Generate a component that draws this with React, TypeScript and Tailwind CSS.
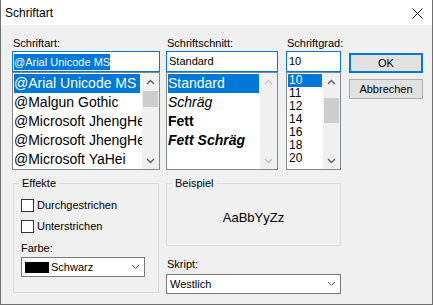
const fontLabel = "font-['Liberation_Sans',Arial,sans-serif]";

function Chevron({ up, color = '#606060', w = 1.4 }: { up?: boolean; color?: string; w?: number }) {
  return (
    <svg width="9" height="6" viewBox="0 0 9 6" fill="none">
      <path d={up ? 'M1 5L4.5 1.5L8 5' : 'M1 1L4.5 4.5L8 1'} stroke={color} strokeWidth={w} />
    </svg>
  );
}

function ScrollBar({ thumb, disabled }: { thumb?: string; disabled?: boolean }) {
  const c = disabled ? '#c4c4c4' : '#606060';
  return (
    <div className="flex w-[17px] shrink-0 flex-col bg-[#f0f0f0]">
      <div className="flex h-[17px] items-center justify-center">
        <Chevron up color={c} />
      </div>
      <div className="flex-1 px-[1px]">{thumb && <div className={`bg-[#cdcdcd] ${thumb}`} />}</div>
      <div className="flex h-[17px] items-center justify-center">
        <Chevron color={c} />
      </div>
    </div>
  );
}

function Combo({ children, width }: { children: React.ReactNode; width: string }) {
  return (
    <div className={`flex h-[20px] items-center justify-between border border-[#7a7a7a] bg-white pr-[4px] ${width}`}>
      <div className="flex items-center">{children}</div>
      <Chevron w={1} color="#555" />
    </div>
  );
}

const fonts = ['@Arial Unicode MS', '@Malgun Gothic', '@Microsoft JhengHei', '@Microsoft JhengHei UI', '@Microsoft YaHei'];
const sizes = ['10', '11', '12', '14', '16', '18', '20'];

export default function App() {
  return (
    <div className={`flex h-[305px] w-[433px] flex-col border-x border-b border-[#6f6f6f] bg-[#f0f0f0] text-black ${fontLabel}`}>
      <div className="flex h-[25px] shrink-0 items-center justify-between bg-white pl-[4px] pr-[9px] pt-[1px]">
        <span className="text-[12px]">Schriftart</span>
        <svg width="11" height="11" viewBox="0 0 11 11">
          <path d="M0.5 0.5L10.5 10.5M10.5 0.5L0.5 10.5" stroke="#111" strokeWidth="1" />
        </svg>
      </div>

      <div className="flex flex-col pl-[11px] pt-[12px] text-[11px] leading-[13px]">
        <div className="flex">
          <div className="flex w-[148px] flex-col">
            <div className="h-[13px] pl-[1px]">Schriftart:</div>
            <div className="mt-[1px] flex h-[21px] items-center border border-[#0078d7] bg-white pl-[1px]">
              <span className="h-[16px] bg-[#0078d7] leading-[16px] text-white">@Arial Unicode MS</span>
            </div>
            <div className="flex h-[98px] border border-[#828790] bg-white">
              <div className="min-w-0 flex-1 overflow-hidden p-[1px] pr-[2px] text-[14px] leading-[19px]">
                {fonts.map((f, i) => (
                  <div key={f} className={`h-[19px] whitespace-nowrap ${i === 0 ? 'bg-[#0078d7] text-white' : ''}`}>
                    {f}
                  </div>
                ))}
              </div>
              <ScrollBar thumb="mt-[1px] h-[16px]" />
            </div>
          </div>

          <div className="ml-[6px] flex w-[112px] flex-col">
            <div className="h-[13px] pl-[1px]">Schriftschnitt:</div>
            <div className="mt-[1px] flex h-[21px] items-center border border-[#0078d7] bg-white pl-[2px]">Standard</div>
            <div className="flex h-[98px] border border-[#828790] bg-white">
              <div className="min-w-0 flex-1 overflow-hidden p-[1px] text-[14px] leading-[19px]">
                <div className="h-[19px] bg-[#0078d7] text-white">Standard</div>
                <div className="h-[19px] italic">Schräg</div>
                <div className="h-[19px] font-bold">Fett</div>
                <div className="h-[19px] whitespace-nowrap font-bold italic">Fett Schräg</div>
              </div>
              <ScrollBar disabled />
            </div>
          </div>

          <div className="ml-[8px] flex w-[55px] flex-col">
            <div className="h-[13px] pl-[1px]">Schriftgrad:</div>
            <div className="mt-[1px] flex h-[21px] items-center border border-[#0078d7] bg-white pl-[2px]">10</div>
            <div className="flex h-[98px] border border-[#828790] bg-white">
              <div className="min-w-0 flex-1 overflow-hidden p-[1px] text-[12px] leading-[13px]">
                {sizes.map((s, i) => (
                  <div key={s} className={`h-[13px] pl-[1px] ${i === 0 ? 'bg-[#0078d7] text-white' : ''}`}>
                    {s}
                  </div>
                ))}
              </div>
              <ScrollBar thumb="mt-[8px] h-[25px]" />
            </div>
          </div>

          <div className="ml-[8px] flex w-[74px] flex-col gap-[6px] pt-[16px]">
            <button type="button" className="h-[20px] border-2 border-[#0078d7] bg-[#e1e1e1] text-[11px]">
              OK
            </button>
            <button type="button" className="h-[20px] border border-[#adadad] bg-[#e1e1e1] text-[11px]">
              Abbrechen
            </button>
          </div>
        </div>

        <div className="mt-[7px] flex">
          <fieldset className="ml-[1px] h-[116px] w-[146px] border border-[#dcdcdc] px-[5px]">
            <legend className="px-[3px] leading-[13px]">Effekte</legend>
            <div className="mt-[9px] flex h-[13px] items-center gap-[3px] pl-[2px]">
              <span className="h-[13px] w-[13px] border border-[#333] bg-white" />
              Durchgestrichen
            </div>
            <div className="mt-[8px] flex h-[13px] items-center gap-[3px] pl-[2px]">
              <span className="h-[13px] w-[13px] border border-[#333] bg-white" />
              Unterstrichen
            </div>
            <div className="mt-[9px] h-[13px] pl-[2px]">Farbe:</div>
            <div className="mt-[2px] pl-[2px]">
              <Combo width="w-[124px]">
                <span className="ml-[3px] h-[11px] w-[24px] bg-black" />
                <span className="ml-[2px]">Schwarz</span>
              </Combo>
            </div>
          </fieldset>

          <div className="ml-[7px] flex w-[175px] flex-col">
            <fieldset className="h-[69px] border border-[#dcdcdc] px-[5px]">
              <legend className="px-[3px] leading-[13px]">Beispiel</legend>
              <div className="flex h-[55px] items-center justify-center text-[13px]">AaBbYyZz</div>
            </fieldset>
            <div className="mt-[12px] h-[13px] pl-[1px]">Skript:</div>
            <div className="mt-[3px]">
              <Combo width="w-[175px]">
                <span className="ml-[3px]">Westlich</span>
              </Combo>
            </div>
          </div>
        </div>
      </div>
    </div>
  );
}
